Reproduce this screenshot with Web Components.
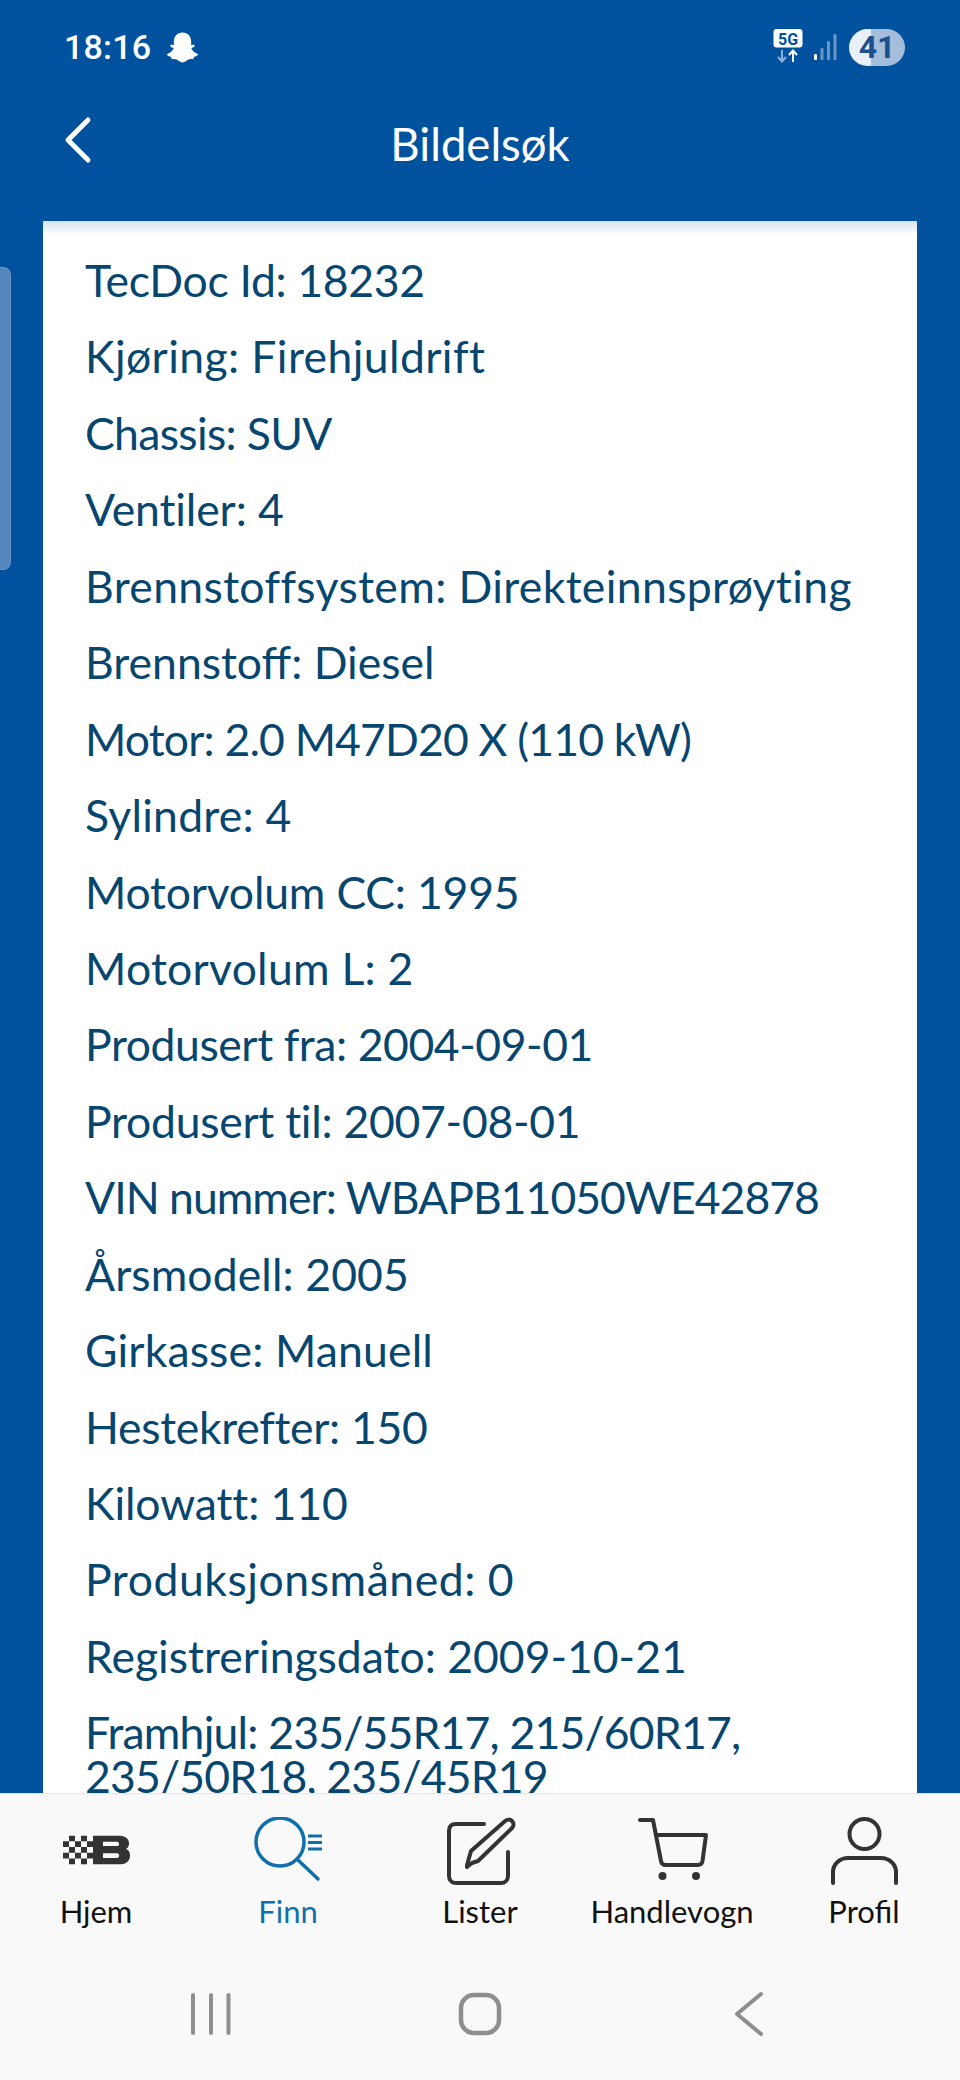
<!DOCTYPE html>
<html lang="no">
<head>
<meta charset="utf-8">
<title>Bildelsøk</title>
<style>
  html, body { margin: 0; height: 100%; }
  body { font-family: "Lato", "Open Sans", sans-serif; overflow: hidden; }
  app-screen { height: 2080px; }
</style>
</head>
<body>
<app-screen>
  <status-bar slot="status" time="18:16" level="41"></status-bar>
  <app-header slot="header">Bildelsøk</app-header>
  <spec-list slot="content">
    <spec-row tracking="-.33">TecDoc Id: 18232</spec-row>
    <spec-row tracking=".4">Kjøring: Firehjuldrift</spec-row>
    <spec-row tracking="-.66">Chassis: SUV</spec-row>
    <spec-row tracking="-.12">Ventiler: 4</spec-row>
    <spec-row tracking=".36">Brennstoffsystem: Direkteinnsprøyting</spec-row>
    <spec-row>Brennstoff: Diesel</spec-row>
    <spec-row tracking="-.83">Motor: 2.0 M47D20 X (110 kW)</spec-row>
    <spec-row tracking=".24">Sylindre: 4</spec-row>
    <spec-row tracking="-.2">Motorvolum CC: 1995</spec-row>
    <spec-row tracking=".26">Motorvolum L: 2</spec-row>
    <spec-row tracking="-.42">Produsert fra: 2004-09-01</spec-row>
    <spec-row tracking="-.27">Produsert til: 2007-08-01</spec-row>
    <spec-row tracking="-.98">VIN nummer: WBAPB11050WE42878</spec-row>
    <spec-row tracking=".1">Årsmodell: 2005</spec-row>
    <spec-row tracking=".15">Girkasse: Manuell</spec-row>
    <spec-row tracking="-.3">Hestekrefter: 150</spec-row>
    <spec-row tracking="-.1">Kilowatt: 110</spec-row>
    <spec-row tracking=".55">Produksjonsmåned: 0</spec-row>
    <spec-row>Registreringsdato: 2009-10-21</spec-row>
    <spec-row tracking="-.8">Framhjul: 235/55R17, 215/60R17, 235/50R18, 235/45R19</spec-row>
  </spec-list>
  <bottom-nav slot="nav">
    <nav-item icon="home">Hjem</nav-item>
    <nav-item icon="search" active>Finn</nav-item>
    <nav-item icon="lists">Lister</nav-item>
    <nav-item icon="cart">Handlevogn</nav-item>
    <nav-item icon="profile">Profil</nav-item>
  </bottom-nav>
  <system-nav slot="system"></system-nav>
</app-screen>

<script>
  class AppScreen extends HTMLElement {
    constructor() {
      super();
      this.attachShadow({ mode: 'open' });
      this.shadowRoot.innerHTML = `
        <style>
          :host {
            display: flex;
            flex-direction: column;
            width: 960px;
            background-color: #00529f;
            overflow: hidden;
            position: relative;
          }
          .content {
            flex: 1;
            min-height: 0;
            overflow: hidden;
            padding: 0 43px;
            position: relative;
          }
          .thumb {
            position: absolute;
            left: 0;
            top: 46px;
            width: 11px;
            height: 303px;
            box-sizing: border-box;
            background-color: #5286bd;
            border: 1px solid #6d98c6;
            border-left: none;
            border-radius: 0 8px 8px 0;
          }
        </style>
        <slot name="status"></slot>
        <slot name="header"></slot>
        <div class="content">
          <div class="thumb"></div>
          <slot name="content"></slot>
        </div>
        <slot name="nav"></slot>
        <slot name="system"></slot>
      `;
    }
  }

  class StatusBar extends HTMLElement {
    constructor() {
      super();
      this.attachShadow({ mode: 'open' });
      const time = this.getAttribute('time');
      const level = this.getAttribute('level');
      this.shadowRoot.innerHTML = `
        <style>
          :host {
            display: flex;
            align-items: center;
            height: 94px;
            padding: 0 55px 0 64px;
            color: #fff;
            font-family: "Roboto", sans-serif;
          }
          .time { font-size: 34px; font-weight: 500; letter-spacing: 0.2px; }
          .ghost { margin-left: 15px; display: block; }
          .spacer { flex: 1; }
          svg { display: block; }
          .signal { margin-left: 11px; }
          .battery {
            margin-left: 11px;
            width: 56px;
            height: 37px;
            border-radius: 19px;
            background: linear-gradient(90deg, #e9eff7 0 40%, #a3bddb 40% 100%);
            color: #1c4f8e;
            font-size: 32px;
            font-weight: 700;
            line-height: 37px;
            text-align: center;
          }
        </style>
        <span class="time">${time}</span>
        <svg class="ghost" width="33" height="33" viewBox="0 0 32 32">
          <path fill="#fff" d="M16 1.5c5 0 8.4 3.8 8.4 8.6v3.6l2.7-.7.9 1.6c-.6 1-2.2 1.5-3.5 2 .9 2.8 3.4 5 6.4 5.8.4 1-.6 2-3.9 2.7l-.6 2.2c-1.800-.3-3.500-.3-5 .4-1.500 1-3 2.800-5.400 2.800s-3.900-1.800-5.400-2.800c-1.500-.7-3.200-.7-5-.4l-.6-2.200c-3.300-.7-4.300-1.700-3.900-2.700 3-.8 5.500-3 6.400-5.800-1.300-.5-2.900-1-3.500-2l.9-1.600 2.700.7v-3.600c0-4.800 3.400-8.600 8.400-8.600z"/>
        </svg>
        <span class="spacer"></span>
        <svg width="30" height="36" viewBox="0 0 30 36">
          <rect x="0.500" y="0" width="29" height="18.500" rx="3" fill="#fff"/>
          <text x="15" y="15.500" text-anchor="middle" font-family="Roboto, sans-serif" font-size="16" font-weight="700" fill="#00529f">5G</text>
          <path d="M9 21v11M5 28l4 4.500 4-4.500" fill="none" stroke="#8fb0d6" stroke-width="2"/>
          <path d="M20 33V22M16 26l4-4.500 4 4.500" fill="none" stroke="#fff" stroke-width="2"/>
        </svg>
        <svg class="signal" width="24" height="28" viewBox="0 0 24 28">
          <rect x="0" y="21" width="3" height="6" rx="1" fill="#fff"/>
          <rect x="6.500" y="15" width="3" height="12" rx="1" fill="#6c96c6"/>
          <rect x="13" y="8" width="3" height="19" rx="1" fill="#6c96c6"/>
          <rect x="19.500" y="1" width="3" height="26" rx="1" fill="#6c96c6"/>
        </svg>
        <div class="battery">${level}</div>
      `;
    }
  }

  class AppHeader extends HTMLElement {
    constructor() {
      super();
      this.attachShadow({ mode: 'open' });
      this.shadowRoot.innerHTML = `
        <style>
          :host {
            display: flex;
            align-items: center;
            justify-content: center;
            height: 127px;
            position: relative;
            color: #fff;
            font-family: "Lato", sans-serif;
            font-size: 45.500px;
            padding-bottom: 29px;
            box-sizing: border-box;
          }
          .back {
            position: absolute;
            left: 62px;
            top: 20px;
          }
        </style>
        <svg class="back" width="32" height="52" viewBox="0 0 32 52">
          <path d="M26 6 6 26l20 20" fill="none" stroke="#fff" stroke-width="5" stroke-linecap="round" stroke-linejoin="round"/>
        </svg>
        <slot></slot>
      `;
    }
  }

  class SpecList extends HTMLElement {
    constructor() {
      super();
      this.attachShadow({ mode: 'open' });
      this.shadowRoot.innerHTML = `
        <style>
          :host {
            display: flex;
            flex-direction: column;
            gap: 32.450px;
            min-height: 100%;
            box-sizing: border-box;
            padding: 37px 42px 0;
            background: linear-gradient(#d4e2eb 0, #ffffff 14px);
            color: #07466f;
            font-family: "Lato", sans-serif;
            font-size: 44.500px;
          }
        </style>
        <slot></slot>
      `;
    }
  }

  // tracking: letter spacing in px for this row
  class SpecRow extends HTMLElement {
    constructor() {
      super();
      this.attachShadow({ mode: 'open' });
      const tracking = this.getAttribute('tracking') || 0;
      this.shadowRoot.innerHTML = `
        <style>
          :host { display: block; line-height: 44px; letter-spacing: ${tracking}px; }
        </style>
        <slot></slot>
      `;
    }
  }

  class BottomNav extends HTMLElement {
    constructor() {
      super();
      this.attachShadow({ mode: 'open' });
      this.shadowRoot.innerHTML = `
        <style>
          :host {
            display: grid;
            grid-template-columns: repeat(5, 1fr);
            height: 176px;
            box-sizing: border-box;
            background-color: #f9f9f9;
            border-top: 1px solid #e4e4e4;
          }
        </style>
        <slot></slot>
      `;
    }
  }

  // Icons are keyed by the icon attribute; all drawn in a 96x72 box
  const NAV_ICONS = {
    home: `
      <g fill="#333" transform="translate(0 -3.200) scale(1 .95)">
        <path d="M15 29h6v6h-6zM27 29h6v6h-6zM39 29h6v6h-6z"/>
        <path d="M21 23h6v6h-6zM33 23h6v6h-6zM21 35h6v6h-6zM33 35h6v6h-6zM15 41h6v6h-6zM27 41h6v6h-6zM39 41h6v6h-6zM21 47h6v6h-6zM33 47h6v6h-6z"/>
        <path fill-rule="evenodd" d="M45 23h27c6 0 9 4 9 8 0 3-1 5-3 6 3 1 4 4 4 7 0 5-3 9-9 9H45zM55 29.500v4.500h14c1.500 0 2-1 2-2.200s-.5-2.300-2-2.300zM55 41.500v5h14c1.500 0 2.200-1.200 2.200-2.500s-.7-2.500-2.200-2.500z"/>
      </g>`,
    search: `
      <g fill="none" stroke="#1070ab" stroke-width="3.500">
        <circle cx="40" cy="25" r="24"/>
        <path d="M58 43l20 19" stroke-linecap="round"/>
        <path d="M68 19h14M68 25.500h14M68 32h14" stroke-width="3"/>
      </g>`,
    lists: `
      <g fill="none" stroke="#333" stroke-width="4" stroke-linecap="round" stroke-linejoin="round">
        <path d="M52 7H24c-4 0-7 2-7 7v45c0 4 3 7 7 7h45c4 0 7-3 7-7V35"/>
        <path d="M40 46l-5 4 0-2 4-14L72 5c3-3 6-3 8-1s2 5 0 7L46 44z"/>
      </g>`,
    cart: `
      <g fill="none" stroke="#333" stroke-width="4" stroke-linecap="round" stroke-linejoin="round">
        <path d="M16 3h13l8 41c.4 3 3 4 5 4h32c2 0 4-1 4.500-4l3.500-26H32"/>
      </g>
      <circle cx="38.500" cy="59" r="4" fill="#333"/>
      <circle cx="72" cy="59" r="4" fill="#333"/>`,
    profile: `
      <g fill="none" stroke="#333" stroke-width="4" stroke-linecap="round">
        <circle cx="48.500" cy="17" r="15"/>
        <path d="M17 66V55c0-8 7-14 15-14h33c8 0 15 6 15 14v11"/>
      </g>`
  };

  class NavItem extends HTMLElement {
    constructor() {
      super();
      this.attachShadow({ mode: 'open' });
      const icon = NAV_ICONS[this.getAttribute('icon')];
      const color = this.hasAttribute('active') ? '#1070ab' : '#111';
      this.shadowRoot.innerHTML = `
        <style>
          :host {
            display: flex;
            flex-direction: column;
            align-items: center;
            padding-top: 23px;
            color: ${color};
            font-family: "Lato", sans-serif;
            font-size: 31px;
            line-height: 38px;
          }
          svg { display: block; margin-bottom: 3px; }
        </style>
        <svg width="96" height="72" viewBox="0 0 96 72">${icon}</svg>
        <slot></slot>
      `;
    }
  }

  class SystemNav extends HTMLElement {
    constructor() {
      super();
      this.attachShadow({ mode: 'open' });
      this.shadowRoot.innerHTML = `
        <style>
          :host {
            display: grid;
            grid-template-columns: repeat(3, 269px);
            justify-content: center;
            justify-items: center;
            align-items: start;
            height: 111px;
            padding-top: 19px;
            box-sizing: border-box;
            background-color: #f9f9f9;
          }
          svg { display: block; }
        </style>
        <svg width="48" height="52" viewBox="0 0 48 52">
          <path d="M6 7v38M24 7v38M41.500 7v38" fill="none" stroke="#8e8e8e" stroke-width="4" stroke-linecap="round"/>
        </svg>
        <svg width="48" height="52" viewBox="0 0 48 52">
          <rect x="5" y="7" width="38" height="38" rx="13" fill="none" stroke="#8e8e8e" stroke-width="4.500"/>
        </svg>
        <svg width="48" height="52" viewBox="0 0 48 52">
          <path d="M36 6 12 26l24 20" fill="none" stroke="#8e8e8e" stroke-width="4" stroke-linecap="round" stroke-linejoin="round"/>
        </svg>
      `;
    }
  }

  customElements.define('app-screen', AppScreen);
  customElements.define('status-bar', StatusBar);
  customElements.define('app-header', AppHeader);
  customElements.define('spec-list', SpecList);
  customElements.define('spec-row', SpecRow);
  customElements.define('bottom-nav', BottomNav);
  customElements.define('nav-item', NavItem);
  customElements.define('system-nav', SystemNav);
</script>
</body>
</html>
